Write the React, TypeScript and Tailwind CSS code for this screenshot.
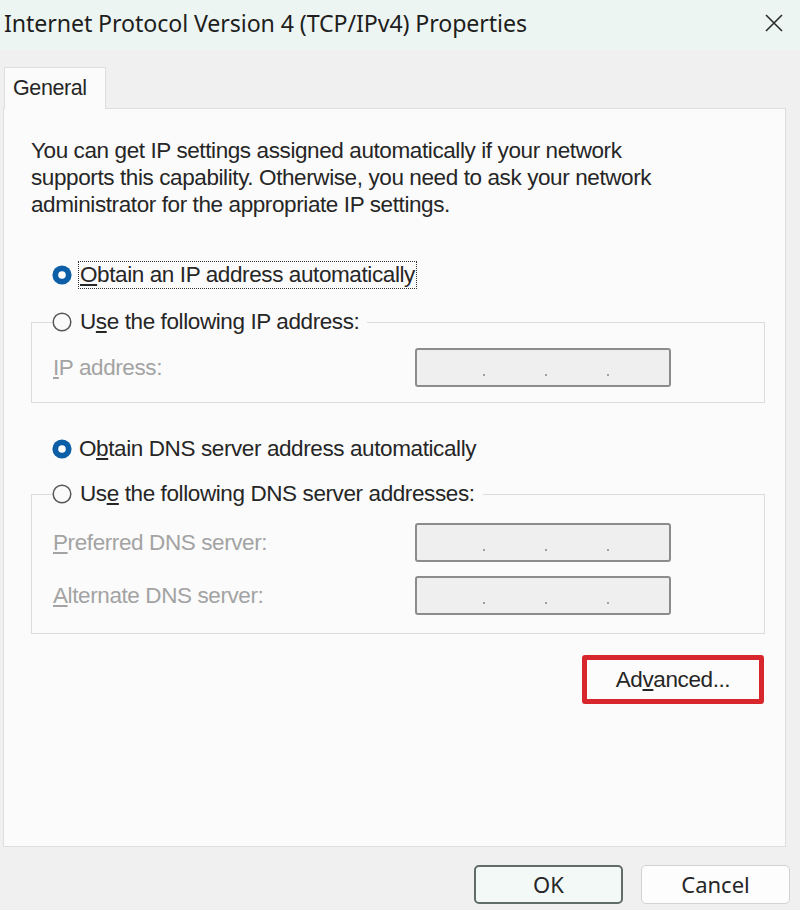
const body = "font-['Liberation_Sans',Arial,sans-serif]";
const ui = "font-['Noto_Sans','Open_Sans',sans-serif]";

const Radio = ({ checked }: { checked?: boolean }) =>
  checked ? (
    <svg width="20" height="20" viewBox="0 0 20 20" className="shrink-0">
      <circle cx="10" cy="10" r="9.6" fill="#0c5ea6" />
      <circle cx="10" cy="10" r="3.8" fill="#ffffff" />
    </svg>
  ) : (
    <svg width="20" height="20" viewBox="0 0 20 20" className="shrink-0">
      <circle cx="10" cy="10" r="8.8" fill="#fafafa" stroke="#555555" strokeWidth="1.5" />
    </svg>
  );

const IpBox = () => (
  <div className="w-[256px] h-[39px] rounded-[3px] border-2 border-[#8c8c8c] bg-[#efefef] flex items-end pb-[9px] pl-[66px] gap-[60px]">
    <span className="w-[2px] h-[2px] bg-[#a0a0a0]" />
    <span className="w-[2px] h-[2px] bg-[#a0a0a0]" />
    <span className="w-[2px] h-[2px] bg-[#a0a0a0]" />
  </div>
);

const FieldRow = ({ children }: { children: React.ReactNode }) => (
  <div className="flex items-center justify-between pl-[1px] pr-[93px]">
    <span className="text-[22.5px] text-[#a3a3a3] tracking-[-0.4px]">{children}</span>
    <IpBox />
  </div>
);

export default function App() {
  return (
    <div className={`w-[800px] h-[910px] flex flex-col bg-[#f1f0f0] text-[#262626] ${body}`}>
      {/* title bar */}
      <div className="h-[50px] bg-[#edf5f2] flex items-center justify-between pl-[4px] pr-[16px]">
        <span className={`text-[23.2px] text-[#1e1e1e] ${ui} -mt-[4px] tracking-[-0.1px]`}>
          Internet Protocol Version 4 (TCP/IPv4) Properties
        </span>
        <svg width="20" height="20" viewBox="0 0 20 20" className="-mt-[4px]">
          <path d="M2 2 L18 18 M18 2 L2 18" stroke="#2a2a2a" strokeWidth="1.6" />
        </svg>
      </div>

      {/* tabs */}
      <div className="h-[58px] flex items-end pl-[4px]">
        <div className="w-[102px] h-[42px] bg-[#fbfbfb] border border-b-0 border-[#dedede] flex items-center pl-[8px] -mb-px relative z-10">
          <span className="text-[21.5px] tracking-[-0.4px]">General</span>
        </div>
      </div>

      {/* panel */}
      <div className="ml-[3px] w-[783px] h-[739px] bg-[#fbfbfb] border border-[#dedede] flex flex-col pl-[27px]">
        <p className="mt-[28px] text-[22.5px] leading-[27px] tracking-[-0.4px]">
          You can get IP settings assigned automatically if your network
          <br />
          supports this capability. Otherwise, you need to ask your network
          <br />
          administrator for the appropriate IP settings.
        </p>

        <div className="mt-[42px] h-[30px] flex items-center pl-[21px] gap-[6px]">
          <Radio checked />
          <span className="text-[22.5px] tracking-[-0.4px] border border-dotted border-[#333] px-[1px] leading-[26px]">
            <u className="underline-offset-2">O</u>btain an IP address automatically
          </span>
        </div>

        <fieldset className="mt-[17px] mr-[20px] border border-[#dcdcdc] pl-[20px] pb-[15px]">
          <legend className="h-[30px] flex items-center gap-[8px] pr-[8px]">
            <Radio />
            <span className="text-[22.5px] tracking-[-0.4px]">
              U<u className="underline-offset-2">s</u>e the following IP address:
            </span>
          </legend>
          <div className="mt-[11px]">
            <FieldRow>
              <u className="underline-offset-2">I</u>P address:
            </FieldRow>
          </div>
        </fieldset>

        <div className="mt-[31px] h-[30px] flex items-center pl-[21px] gap-[7px]">
          <Radio checked />
          <span className="text-[22.5px] tracking-[-0.4px]">
            O<u className="underline-offset-2">b</u>tain DNS server address automatically
          </span>
        </div>

        <fieldset className="mt-[15px] mr-[20px] border border-[#dcdcdc] pl-[20px] pb-[18px]">
          <legend className="h-[30px] flex items-center gap-[8px] pr-[8px]">
            <Radio />
            <span className="text-[22.5px] tracking-[-0.4px]">
              Us<u className="underline-offset-2">e</u> the following DNS server addresses:
            </span>
          </legend>
          <div className="mt-[14px] flex flex-col gap-[14px]">
            <FieldRow>
              <u className="underline-offset-2">P</u>referred DNS server:
            </FieldRow>
            <FieldRow>
              <u className="underline-offset-2">A</u>lternate DNS server:
            </FieldRow>
          </div>
        </fieldset>

        <div className="mt-[21px] flex justify-end pr-[21px]">
          <button className="w-[182px] h-[49px] border-[5px] border-[#d8262d] rounded-[3px] bg-[#fcfcfc] text-[22.5px] tracking-[-0.4px] flex items-center justify-center">
            Ad<u className="underline-offset-2">v</u>anced...
          </button>
        </div>
      </div>

      {/* footer buttons */}
      <div className="flex-1 flex justify-end items-start pt-[18px] pr-[10px] gap-[18px]">
        <button className={`w-[149px] h-[39px] rounded-[5px] border-2 border-[#5f6c6a] bg-[#f2f9f7] text-[22px] ${ui} flex items-center justify-center`}>
          OK
        </button>
        <button className={`w-[149px] h-[39px] rounded-[5px] border border-[#d2d2d2] bg-[#fdfdfd] text-[22px] ${ui} flex items-center justify-center`}>
          Cancel
        </button>
      </div>
    </div>
  );
}
